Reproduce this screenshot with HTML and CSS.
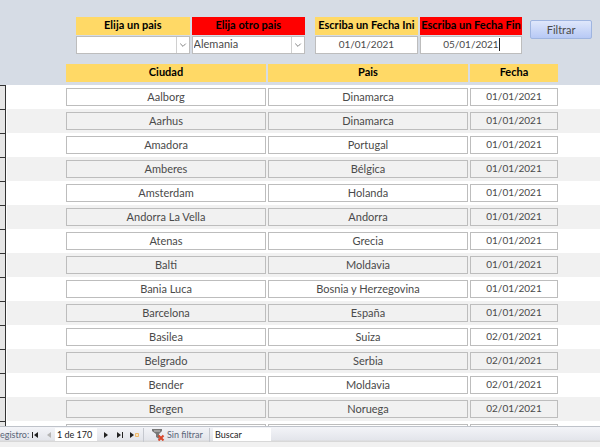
FILE: index.html
```html
<!DOCTYPE html>
<html lang="es">
<head>
<meta charset="utf-8">
<title>Ciudades</title>
<link rel="stylesheet" href="styles.css">
</head>
<body>
<form class="filters">
  <div class="field country">
    <label class="caption" for="country-a">Elija un pais</label>
    <div class="combo">
      <select class="control" id="country-a"><option></option></select>
      <svg class="arrow" viewBox="0 0 13 16"><path d="M3.5 6.5l3 3 3-3"/></svg>
    </div>
  </div>
  <div class="field country">
    <label class="caption alert" for="country-b">Elija otro pais</label>
    <div class="combo">
      <select class="control" id="country-b"><option>Alemania</option></select>
      <svg class="arrow" viewBox="0 0 13 16"><path d="M3.5 6.5l3 3 3-3"/></svg>
    </div>
  </div>
  <div class="field date first-date">
    <label class="caption" for="date-from">Escriba un Fecha Ini</label>
    <input class="control" id="date-from" type="text" value="01/01/2021">
  </div>
  <div class="field date">
    <label class="caption alert" for="date-to">Escriba un Fecha Fin</label>
    <div class="editing"><input class="control" id="date-to" type="text" value="05/01/2021"></div>
  </div>
  <button class="apply" type="button">Filtrar</button>
</form>
<main class="records">
  <table>
    <colgroup><col class="c-sel"><col class="c-text"><col class="c-text"><col class="c-date"><col></colgroup>
    <thead><tr><td></td><th><div class="head">Ciudad</div></th><th><div class="head">Pais</div></th><th><div class="head">Fecha</div></th><td></td></tr></thead>
    <tbody>
      <tr><td class="sel"></td><td><div class="box">Aalborg</div></td><td><div class="box">Dinamarca</div></td><td><div class="box day">01/01/2021</div></td><td></td></tr>
      <tr><td class="sel"></td><td><div class="box">Aarhus</div></td><td><div class="box">Dinamarca</div></td><td><div class="box day">01/01/2021</div></td><td></td></tr>
      <tr><td class="sel"></td><td><div class="box">Amadora</div></td><td><div class="box">Portugal</div></td><td><div class="box day">01/01/2021</div></td><td></td></tr>
      <tr><td class="sel"></td><td><div class="box">Amberes</div></td><td><div class="box">Bélgica</div></td><td><div class="box day">01/01/2021</div></td><td></td></tr>
      <tr><td class="sel"></td><td><div class="box">Amsterdam</div></td><td><div class="box">Holanda</div></td><td><div class="box day">01/01/2021</div></td><td></td></tr>
      <tr><td class="sel"></td><td><div class="box">Andorra La Vella</div></td><td><div class="box">Andorra</div></td><td><div class="box day">01/01/2021</div></td><td></td></tr>
      <tr><td class="sel"></td><td><div class="box">Atenas</div></td><td><div class="box">Grecia</div></td><td><div class="box day">01/01/2021</div></td><td></td></tr>
      <tr><td class="sel"></td><td><div class="box">Balti</div></td><td><div class="box">Moldavia</div></td><td><div class="box day">01/01/2021</div></td><td></td></tr>
      <tr><td class="sel"></td><td><div class="box">Bania Luca</div></td><td><div class="box">Bosnia y Herzegovina</div></td><td><div class="box day">01/01/2021</div></td><td></td></tr>
      <tr><td class="sel"></td><td><div class="box">Barcelona</div></td><td><div class="box">España</div></td><td><div class="box day">01/01/2021</div></td><td></td></tr>
      <tr><td class="sel"></td><td><div class="box">Basilea</div></td><td><div class="box">Suiza</div></td><td><div class="box day">02/01/2021</div></td><td></td></tr>
      <tr><td class="sel"></td><td><div class="box">Belgrado</div></td><td><div class="box">Serbia</div></td><td><div class="box day">02/01/2021</div></td><td></td></tr>
      <tr><td class="sel"></td><td><div class="box">Bender</div></td><td><div class="box">Moldavia</div></td><td><div class="box day">02/01/2021</div></td><td></td></tr>
      <tr><td class="sel"></td><td><div class="box">Bergen</div></td><td><div class="box">Noruega</div></td><td><div class="box day">02/01/2021</div></td><td></td></tr>
      <tr><td class="sel"></td><td><div class="box"></div></td><td><div class="box"></div></td><td><div class="box day"></div></td><td></td></tr>
    </tbody>
  </table>
</main>
<footer class="navigator">
  <label class="nav-label" for="position">egistro:</label>
  <button class="nav" type="button" aria-label="Primero"><svg width="8" height="8" viewBox="0 0 8 8"><path d="M1 1h1v6H1zM7 1v6L3 4z"/></svg></button>
  <button class="nav dim" type="button" aria-label="Anterior"><svg width="8" height="8" viewBox="0 0 8 8"><path d="M6 1v6L2 4z"/></svg></button>
  <input class="position" id="position" type="text" value="1 de 170">
  <button class="nav" type="button" aria-label="Siguiente"><svg width="8" height="8" viewBox="0 0 8 8"><path d="M2 1v6l4-3z"/></svg></button>
  <button class="nav" type="button" aria-label="Último"><svg width="8" height="8" viewBox="0 0 8 8"><path d="M1 1v6l4-3zM6 1h1v6H6z"/></svg></button>
  <button class="nav new" type="button" aria-label="Nuevo"><svg width="12" height="8" viewBox="0 0 12 8"><path d="M0 1v6l4-3z"/><path class="spark" d="M5.500 2.500h3v3h-3z"/></svg></button>
  <button class="filter-state" type="button"><svg width="13" height="12" viewBox="0 0 13 12"><path class="funnel" d="M0 0h10v2L7 5v5L4 8V5L0 2z"/><path class="shine" d="M2 2h6"/><path class="cross" d="M6.500 6.500l5 5M11.500 6.500l-5 5"/></svg>Sin filtrar</button>
  <input class="search" type="text" value="Buscar" aria-label="Buscar">
</footer>
</body>
</html>
```
FILE: styles.css
```css
*, *::before, *::after { box-sizing: border-box; }

body {
  margin: 0;
  height: 100vh;
  display: flex;
  flex-direction: column;
  overflow: hidden;
  background: #fff;
  color: #4a4a4a;
  font: 11px/16px Lato, "Open Sans", sans-serif;
}

button, input, select { margin: 0; font: inherit; color: inherit; outline: 0; }

.filters {
  display: flex;
  align-items: flex-start;
  gap: 2px;
  padding: 17px 8px 7px 76px;
  background: #d6dce5;
}

.field { display: flex; flex-direction: column; gap: 1px; }
.country { flex: 0 1 114px; }
.date { flex: 0 1 103px; }
.first-date { margin-left: 8px; }

.caption, .head {
  height: 18px;
  background: #ffd966;
  color: #000;
  font-weight: 700;
  line-height: 15px;
  text-align: center;
  white-space: nowrap;
}
.caption.alert { background: #f00; }

.control {
  display: block;
  width: 100%;
  height: 18px;
  padding: 0 1px 2px;
  border: 1px solid #bdbdbd;
  border-radius: 0;
  background: #fff;
  line-height: 14px;
  appearance: none;
}
input.control { font-size: 10px; text-align: center; }

.combo, .editing { position: relative; }
.arrow {
  position: absolute;
  top: 1px;
  right: 1px;
  width: 13px;
  height: 16px;
  border-left: 1px solid #d0d0d0;
  fill: none;
  stroke: #777;
  pointer-events: none;
}
.editing::after {
  content: "";
  position: absolute;
  top: 2px;
  left: calc(50% + 28px);
  width: 1px;
  height: 13px;
  background: #222;
}

.apply {
  width: 62px;
  height: 19px;
  margin: 3px 0 0 6px;
  padding: 0;
  border: 1px solid #9fb5e0;
  border-radius: 2px;
  background: linear-gradient(#dfe7fb, #b7c9f5);
  line-height: 16px;
}

.records { flex: 1; min-height: 0; overflow: hidden; }

table { width: 100%; border-collapse: collapse; table-layout: fixed; }
.c-sel { width: 65px; }
.c-text { width: 202px; }
.c-date { width: 90px; }

th, td { height: 24px; padding: 3px 1px; vertical-align: top; }
thead { background: #d6dce5; }
tbody tr:nth-child(even) { background: #f1f1f1; }

.box {
  height: 18px;
  border: 1px solid #bdbdbd;
  line-height: 15px;
  text-align: center;
  white-space: nowrap;
}
.day { font-size: 10px; }

.sel { padding: 0; }
.sel::before {
  content: "";
  display: block;
  width: 6px;
  height: 24px;
  border: solid #333;
  border-width: 1px 1px 0 0;
  background: #e6e6e6;
  box-shadow: 1px 0 #fff;
}

.navigator {
  display: flex;
  align-items: center;
  height: 21px;
  padding-bottom: 5px;
  border-top: 1px solid #bfc3ca;
  background: linear-gradient(#f3f4f8, #e3e5eb 13px, #d8d8d8 14px, #d8d8d8 15px, #f1f1f1 15px);
  color: #5a6578;
  font: 9px/14px Lato, "Open Sans", sans-serif;
}
.nav-label { width: 31px; white-space: nowrap; }
.nav {
  display: flex;
  width: 14px;
  padding: 0;
  border: 0;
  background: none;
  fill: #222;
}
.nav.dim { width: 10px; fill: #b5b5b5; }
.nav.new { width: 13px; }
.spark { fill: #fbe3bd; stroke: #eeb96c; }

.position, .search {
  height: 13px;
  padding: 0 2px;
  border: 0;
  background: #fff;
  color: #222;
}
.position { width: 42px; margin-right: 5px; }
.search { width: 58px; }

.filter-state {
  display: flex;
  align-items: center;
  gap: 2px;
  width: 67px;
  height: 14px;
  margin-right: 3px;
  padding: 0 0 0 8px;
  border: solid #c5c8cf;
  border-width: 0 1px;
  background: none;
  white-space: nowrap;
}
.funnel { fill: #777; }
.shine { stroke: #ccc; }
.cross { stroke: #d9472b; stroke-width: 2; }
```
